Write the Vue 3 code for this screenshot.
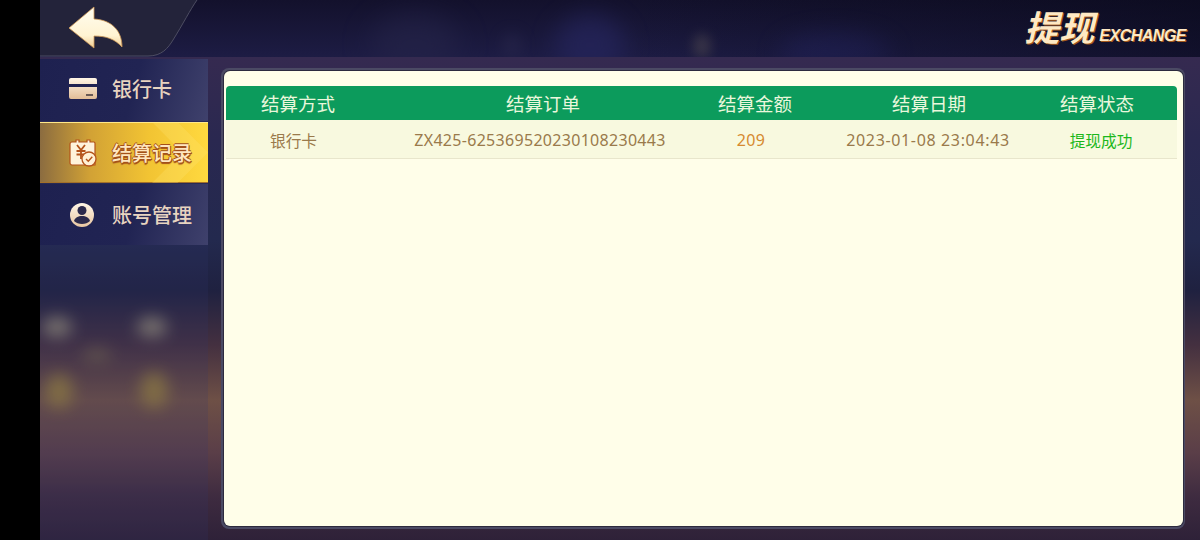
<script setup>
const menu = [
  { key: 'card', label: '银行卡' },
  { key: 'record', label: '结算记录', active: true },
  { key: 'user', label: '账号管理' }
]
const heads = ['结算方式', '结算订单', '结算金额', '结算日期', '结算状态']
</script>

<template>
  <div class="screen">
    <div class="app">
      <div class="scene" aria-hidden="true">
        <i class="glow g1"></i><i class="glow g2"></i><i class="glow g3"></i><i class="glow g4"></i><i class="glow g5"></i>
        <div class="sky">
          <i class="glow g6"></i><i class="glow g7"></i><i class="glow g8"></i><i class="glow g9"></i><i class="glow g10"></i>
        </div>
      </div>
      <header class="top">
        <div class="back">
          <svg class="plate" width="160" height="58" viewBox="0 0 160 58">
            <path d="M0 0H157C150 10 143 24 133 40C128 48 122 56 108 56H0Z" fill="#23233a" />
            <path d="M157 0C150 10 143 24 133 40C128 48 122 56 108 56H0" fill="none" stroke="#4d4d62" stroke-width="1" />
          </svg>
          <svg class="arrow" width="56" height="44" viewBox="0 0 56 44">
            <defs>
              <linearGradient id="arrowFill" x1="0" y1="0" x2="0" y2="1">
                <stop offset="0" stop-color="#fffdf0" />
                <stop offset="0.7" stop-color="#fff3d2" />
                <stop offset="1" stop-color="#f0cd92" />
              </linearGradient>
            </defs>
            <path d="M1 22L26 1V13C44 14 54 25 54 41C47 33 38 30 26 30V42Z" fill="url(#arrowFill)" stroke="#d09a58" stroke-width=".8" stroke-linejoin="round" />
          </svg>
        </div>
        <div class="title">
          <span class="title-cn">提现</span>
          <span class="title-en">EXCHANGE</span>
        </div>
      </header>

      <div class="body">
        <nav class="side">
          <div v-for="m in menu" :key="m.key" class="item" :class="{ active: m.active }">
            <svg v-if="m.key === 'card'" class="icon" width="28" height="22" viewBox="0 0 28 22">
              <defs>
                <linearGradient id="cardFill" x1="0" y1="0" x2="0" y2="1">
                  <stop offset="0" stop-color="#fff6e6" />
                  <stop offset="1" stop-color="#e2bd97" />
                </linearGradient>
              </defs>
              <path d="M2 0H26A2 2 0 0 1 28 2V6H0V2A2 2 0 0 1 2 0ZM0 9H28V19A2 2 0 0 1 26 21H2A2 2 0 0 1 0 19Z" fill="url(#cardFill)" />
              <rect x="17" y="16" width="7" height="2" fill="#6a5a55" />
            </svg>
            <svg v-else-if="m.key === 'record'" class="icon" width="28" height="28" viewBox="0 0 28 28">
              <path d="M3 3H7V1H10V3H18V1H21V3H25A1.500 1.500 0 0 1 26 4.500V26H3A2 2 0 0 1 1 24V5A2 2 0 0 1 3 3Z" fill="#fff3dc" stroke="#b4531a" stroke-width="1.200" />
              <path d="M8 6L12 11L16 6M12 11V20M7.500 12H16.500M7.500 15.500H16.500" fill="none" stroke="#b4531a" stroke-width="1.800" />
              <circle cx="20" cy="20" r="7" fill="#fff0d4" stroke="#b4531a" stroke-width="1.300" />
              <path d="M17 20L19.300 22.300L23.300 17.800" fill="none" stroke="#b4531a" stroke-width="1.400" />
            </svg>
            <svg v-else class="icon" width="26" height="26" viewBox="0 0 26 26">
              <defs>
                <linearGradient id="userFill" x1="0" y1="0" x2="0" y2="1">
                  <stop offset="0" stop-color="#fff6e6" />
                  <stop offset="1" stop-color="#e8c6a2" />
                </linearGradient>
              </defs>
              <circle cx="13" cy="13" r="12" fill="url(#userFill)" />
              <circle cx="13" cy="8.500" r="4.500" fill="#2c2a4c" />
              <path d="M5 19C6 15.500 9 14 13 14S20 15.500 21 19C19 21 16 22 13 22S7 21 5 19Z" fill="#2c2a4c" />
            </svg>
            <span class="label">{{ m.label }}</span>
          </div>
        </nav>

        <main class="panel">
          <div class="sheet">
            <div class="thead">
              <span v-for="h in heads" :key="h">{{ h }}</span>
            </div>
            <div class="row">
              <span>银行卡</span>
              <span class="num">ZX425-625369520230108230443</span>
              <span class="num c-amount">209</span>
              <span class="num c-date">2023-01-08 23:04:43</span>
              <span class="c-status">提现成功</span>
            </div>
          </div>
        </main>
      </div>
    </div>
  </div>
</template>

<style>
html, body { margin: 0; background: #000; }
</style>

<style scoped>
.screen {
  width: 1200px;
  height: 540px;
  padding-left: 40px;
  box-sizing: border-box;
  background: #000;
  overflow: hidden;
  font-family: "Noto Sans CJK SC", "Noto Sans", sans-serif;
}
.app {
  position: relative;
  width: 1160px;
  height: 540px;
  overflow: hidden;
  background: linear-gradient(180deg, #352a50 58px, #2a2850 140px, #23294e 240px, #1f2140 290px, #443040 345px, #6e5046 400px, #5a3e48 453px, #3e2b40 497px, #2e2138 540px);
}
.scene { position: absolute; inset: 0; }
.sky {
  position: absolute;
  left: 0;
  top: 0;
  width: 100%;
  height: 57px;
  overflow: hidden;
  background: linear-gradient(180deg, #13112c 0, #1d1c44 100%);
}
.sky::after {
  content: "";
  position: absolute;
  inset: 0;
  background: linear-gradient(90deg, rgba(0,0,0,0) 50%, rgba(8,8,24,.55) 100%);
}
.glow { position: absolute; border-radius: 50%; filter: blur(8px); }
.g1 { left: 2px; top: 317px; width: 30px; height: 20px; background: #a9a283; opacity: .7; }
.g2 { left: 97px; top: 317px; width: 30px; height: 20px; background: #a9a283; opacity: .7; }
.g3 { left: 5px; top: 374px; width: 28px; height: 34px; background: #a38b3a; opacity: .7; }
.g4 { left: 100px; top: 372px; width: 28px; height: 36px; background: #a38b3a; opacity: .7; }
.g5 { left: 42px; top: 348px; width: 30px; height: 14px; background: #7e6f4d; opacity: .6; }
.g6 { left: 515px; top: 15px; width: 70px; height: 60px; background: #26265e; opacity: .7; filter: blur(12px); }
.g7 { left: 653px; top: 34px; width: 18px; height: 24px; background: #4a4450; opacity: .7; filter: blur(6px); }
.g8 { left: 464px; top: 34px; width: 16px; height: 24px; background: #2e2c50; opacity: .6; }
.g9 { left: 740px; top: 34px; width: 110px; height: 40px; background: #252560; opacity: .7; filter: blur(12px); }
.g10 { left: 330px; top: 14px; width: 90px; height: 60px; background: #26254a; opacity: .6; filter: blur(14px); }

.top {
  position: relative;
  height: 59px;
  display: flex;
  justify-content: space-between;
}
.back { position: relative; width: 160px; height: 58px; }
.plate { display: block; }
.arrow { position: absolute; left: 28px; top: 6px; }
.title {
  display: flex;
  align-items: flex-end;
  height: 51px;
  padding-right: 14px;
  font-style: italic;
  font-weight: 700;
}
.title-cn {
  font-size: 35px;
  line-height: 51px;
  color: #ffe9c4;
  text-shadow: 1px 1px 0 #a3591d;
}
.title-en {
  margin-left: 5px;
  font-family: "Liberation Sans", sans-serif;
  font-size: 16px;
  letter-spacing: -.5px;
  line-height: 31px;
  color: #ffe9c4;
  text-shadow: 1px 1px 0 #a3591d;
}

.body {
  position: relative;
  display: flex;
  height: 481px;
}
.side {
  width: 168px;
  flex: none;
  height: 100%;
  display: flex;
  flex-direction: column;
  gap: 1px;
  background: rgba(50, 55, 110, .18);
}
.item {
  position: relative;
  height: 61px;
  display: flex;
  align-items: center;
  padding-left: 29px;
  background: linear-gradient(105deg, #1e2150 0, #212453 55%, #3f416c 100%);
}
.item:first-child { height: 62px; padding-bottom: 3px; box-sizing: border-box; }
.icon { flex: none; }
.label {
  position: absolute;
  left: 72px;
  font-size: 20px;
  font-weight: 500;
  color: #e8d4c0;
}
.item.active {
  background: linear-gradient(90deg, #8b6c40 0, #d2a235 30%, #f2c433 65%, #ffd93f 100%);
  box-shadow: inset 0 1px 0 #ffe88a, inset 0 -1px 0 #a3702a;
}
.item.active::after {
  content: "";
  position: absolute;
  right: 0;
  top: 0;
  width: 80px;
  height: 100%;
  background: rgba(255, 232, 120, .25);
  clip-path: polygon(30% 0, 62% 0, 100% 50%, 62% 100%, 30% 100%, 68% 50%);
}
.item.active .label {
  z-index: 1;
  color: #ffe6bf;
  text-shadow: 1px 1px 0 #a3501a, -1px 0 0 #a3501a, 0 -1px 0 #a3501a, 0 2px 1px #a3501a;
}
.panel {
  margin: 9px 0 0 13px;
  width: 964px;
  height: 461px;
  box-sizing: border-box;
  padding: 3px 2px 3px 3px;
  border-radius: 8px;
  background: #4b4a64;
  flex: none;
}
.sheet {
  height: 100%;
  box-sizing: border-box;
  padding: 15px 6px 0 2px;
  border-radius: 6px;
  background: #fffee9;
  box-shadow: 0 0 0 1px #2c2a3e;
}
.thead {
  height: 34px;
  display: grid;
  grid-template-columns: 144px 346px 78px 270px 66px;
  align-items: center;
  font-size: 18.500px;
  color: #eaf7dc;
  white-space: nowrap;
  background: #0c9b5c;
  border-radius: 4px 4px 0 0;
}
.thead span, .row span { justify-self: center; }
.row {
  height: 39px;
  box-sizing: border-box;
  padding-top: 2px;
  display: grid;
  grid-template-columns: 135px 358px 64px 290px 56px;
  align-items: center;
  font-size: 15.700px;
  white-space: nowrap;
  background: #f8f9df;
  border-bottom: 1px solid #e8e6cc;
  color: #9a7a4b;
}
.num {
  font-family: "Noto Sans", sans-serif;
  font-size: 16px;
  letter-spacing: .3px;
}
.c-date { letter-spacing: .65px; }
.c-amount { color: #d68a2f; }
.c-status { color: #1cb81c; }
</style>
